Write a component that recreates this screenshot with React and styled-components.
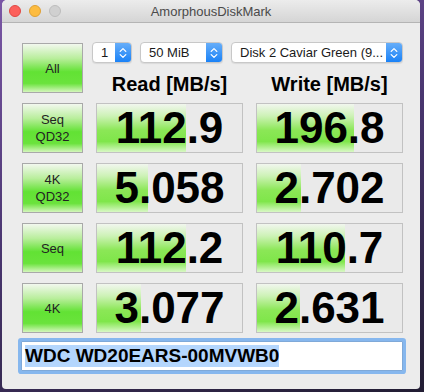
import React from 'react';
import styled, { createGlobalStyle } from 'styled-components';

const GlobalStyle = createGlobalStyle`
  html, body {
    margin: 0;
    padding: 0;
  }
  body {
    width: 424px;
    height: 392px;
    overflow: hidden;
    background: linear-gradient(160deg, #7b57a6 0%, #4a3670 45%, #221d33 100%);
    font-family: "Liberation Sans", Arial, sans-serif;
  }
`;

const Window = styled.div`
  margin-left: 2px;
  width: 418px;
  height: 389px;
  background: #ececec;
  border-radius: 5px 5px 4px 4px;
  overflow: hidden;
  display: flex;
  flex-direction: column;
`;

const TitleBar = styled.div`
  flex: none;
  height: 22px;
  display: grid;
  grid-template-columns: 1fr auto 1fr;
  align-items: center;
  padding: 0 7px;
  background: linear-gradient(#ececec, #d5d5d5);
  border-bottom: 1px solid #b4b4b4;
`;

const Lights = styled.div`
  display: flex;
  gap: 8px;
`;

const Light = styled.span`
  width: 12px;
  height: 12px;
  border-radius: 50%;
  box-sizing: border-box;
  background: ${({ $color }) => $color};
  border: 1px solid ${({ $edge }) => $edge};
`;

const Title = styled.div`
  font-size: 13px;
  color: #4a4a4a;
`;

const Content = styled.div`
  display: grid;
  grid-template-columns: 61px 147px 147px;
  grid-template-rows: repeat(5, 50px) auto;
  column-gap: 13px;
  row-gap: 10px;
  padding: 20px 0 0 20px;
`;

const Label = styled.div`
  box-sizing: border-box;
  display: flex;
  align-items: center;
  justify-content: center;
  text-align: center;
  font-size: 13px;
  line-height: 17px;
  color: #222;
  border: 1px solid #a9a9a9;
  background: linear-gradient(#f2f8ee 0%, #b9ee9c 30%, #62e234 58%, #6ae33c 82%, #d4f6bc 100%);
`;

const TopPanel = styled.div`
  grid-column: 2 / 4;
  display: flex;
  flex-direction: column;
  margin: -1px 0 0 -4px;
`;

const SelectRow = styled.div`
  display: flex;
  gap: 8px;
`;

const Select = styled.div`
  box-sizing: border-box;
  width: ${({ $w }) => $w}px;
  height: 21px;
  display: flex;
  align-items: center;
  background: #fff;
  border: 1px solid #c8c8c8;
  border-radius: 4px;
  box-shadow: 0 1px 1px rgba(0, 0, 0, 0.08);
  overflow: hidden;
`;

const SelectText = styled.span`
  flex: 1;
  padding-left: 8px;
  font-size: 13px;
  color: #1a1a1a;
  white-space: nowrap;
`;

const SelectArrow = styled.span`
  width: 16px;
  align-self: stretch;
  display: flex;
  align-items: center;
  justify-content: center;
  background: linear-gradient(#67aef9, #1a82f7);
`;

const HeaderRow = styled.div`
  display: grid;
  grid-template-columns: 147px 147px;
  column-gap: 13px;
  margin: 9px 0 0 4px;
`;

const Heading = styled.div`
  text-align: center;
  font-size: 20px;
  line-height: 24px;
  font-weight: bold;
  color: #000;
`;

const Result = styled.div`
  position: relative;
  box-sizing: border-box;
  display: flex;
  align-items: center;
  justify-content: center;
  border: 1px solid #c2c2c2;
  background: #eaeaea;
  overflow: hidden;
`;

const Fill = styled.div`
  position: absolute;
  left: 0;
  top: 0;
  bottom: 0;
  background: linear-gradient(#f1f6ee 0%, #cdf2b6 25%, #8be756 55%, #7fe64a 78%, #d9f8c6 100%);
`;

const Value = styled.span`
  position: relative;
  font-size: 44px;
  line-height: 48px;
  font-weight: bold;
  color: #000;
`;

const NameField = styled.div`
  grid-column: 1 / 4;
  box-sizing: border-box;
  height: 30px;
  margin: -2px 0 0 -1px;
  display: flex;
  align-items: center;
  padding-left: 3px;
  background: #fff;
  border: 1px solid #7fa9d8;
  box-shadow: 0 0 0 3px #86b7ee;
  border-radius: 1px;
`;

const Selected = styled.span`
  background: #b4d6fd;
  font-size: 19px;
  line-height: 22px;
  font-weight: bold;
  color: #000;
`;

const Arrows = () => (
  <svg width="8" height="12" viewBox="0 0 8 12">
    <path d="M1.2 4.4 L4 1.6 L6.8 4.4 M1.2 7.6 L4 10.4 L6.8 7.6" fill="none" stroke="#fff" strokeWidth="1.3" strokeLinecap="round" strokeLinejoin="round" />
  </svg>
);

const rows = [
  { label: ['Seq', 'QD32'], read: '112.9', readFill: 89, write: '196.8', writeFill: 97 },
  { label: ['4K', 'QD32'], read: '5.058', readFill: 51, write: '2.702', writeFill: 44 },
  { label: ['Seq'], read: '112.2', readFill: 89, write: '110.7', writeFill: 88 },
  { label: ['4K'], read: '3.077', readFill: 44, write: '2.631', writeFill: 43 },
];

const App = () => (
  <>
    <GlobalStyle />
    <Window>
      <TitleBar>
        <Lights>
          <Light $color="#fc605b" $edge="#df4844" />
          <Light $color="#fdbc40" $edge="#dea034" />
          <Light $color="#d0d0d0" $edge="#bcbcbc" />
        </Lights>
        <Title>AmorphousDiskMark</Title>
        <div />
      </TitleBar>

      <Content>
        <Label>All</Label>
        <TopPanel>
          <SelectRow>
            <Select $w={40}>
              <SelectText>1</SelectText>
              <SelectArrow><Arrows /></SelectArrow>
            </Select>
            <Select $w={83}>
              <SelectText>50 MiB</SelectText>
              <SelectArrow><Arrows /></SelectArrow>
            </Select>
            <Select $w={172}>
              <SelectText>Disk 2 Caviar Green (9...</SelectText>
              <SelectArrow><Arrows /></SelectArrow>
            </Select>
          </SelectRow>
          <HeaderRow>
            <Heading>Read [MB/s]</Heading>
            <Heading>Write [MB/s]</Heading>
          </HeaderRow>
        </TopPanel>

        {rows.map((row) => (
          <React.Fragment key={row.label.join('-') + row.read}>
            <Label>
              {row.label.map((line, i) => (
                <React.Fragment key={i}>
                  {i > 0 && <br />}
                  {line}
                </React.Fragment>
              ))}
            </Label>
            <Result>
              <Fill style={{ width: row.readFill }} />
              <Value>{row.read}</Value>
            </Result>
            <Result>
              <Fill style={{ width: row.writeFill }} />
              <Value>{row.write}</Value>
            </Result>
          </React.Fragment>
        ))}

        <NameField>
          <Selected>WDC WD20EARS-00MVWB0</Selected>
        </NameField>
      </Content>
    </Window>
  </>
);

export default App;
